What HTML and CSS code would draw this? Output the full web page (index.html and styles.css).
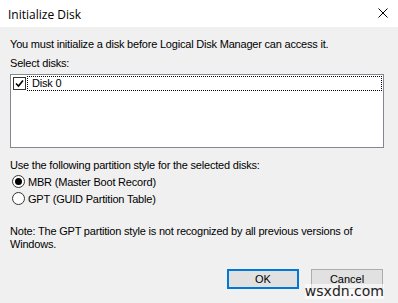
FILE: index.html
```html
<!DOCTYPE html>
<html>
<head>
	<meta charset="utf-8">
	<title>Initialize Disk</title>
	<link rel="stylesheet" href="styles.css">
</head>
<body>
	<div class="titlebar">
		<span class="title">Initialize Disk</span>
		<svg class="close" width="10" height="10" viewBox="0 0 10 10">
			<path d="M0.5 0.5 L9.5 9.5 M9.5 0.5 L0.5 9.5" stroke="#000" stroke-width="1" fill="none"/>
		</svg>
	</div>

	<div class="content">
		<p class="intro">You must initialize a disk before Logical Disk Manager can access it.</p>
		<p class="label">Select disks:</p>

		<div class="listbox">
			<div class="item">
				<span class="check">
					<svg width="9" height="9" viewBox="0 0 9 9">
						<path d="M1 4.5 L3.5 7 L8 1.5" stroke="#000" stroke-width="1.6" fill="none"/>
					</svg>
				</span>
				<span class="item-text">Disk 0</span>
			</div>
		</div>

		<p class="label style-label">Use the following partition style for the selected disks:</p>
		<div class="radio-row">
			<span class="radio checked"></span>
			<span>MBR (Master Boot Record)</span>
		</div>
		<div class="radio-row">
			<span class="radio"></span>
			<span>GPT (GUID Partition Table)</span>
		</div>

		<p class="note">Note: The GPT partition style is not recognized by all previous versions of Windows.</p>

		<div class="buttons">
			<button class="btn default">OK</button>
			<button class="btn">Cancel</button>
		</div>
	</div>

	<div class="watermark">wsxdn.com</div>
</body>
</html>
```

FILE: styles.css
```css
html{font-family: "Liberation Sans", Arial, sans-serif;}
body{
	margin: 0;
	width: 398px;
	height: 303px;
	background: #f0f0f0;
	position: relative;
	overflow: hidden;
	font-size: 11px;
	letter-spacing: -0.2px;
	color: #000;
}

.titlebar {
	height: 27px;
	background: #fff;
	display: flex;
	align-items: center;
	justify-content: space-between;
	padding: 0 10px 0 8px;
	letter-spacing: 0;
}

.title {
	font-family: "Open Sans", "Liberation Sans", sans-serif;
	font-size: 12px;
	margin-top: 1px;
}

.close {
	margin-top: -2px;
}

.content {
	padding: 11px 15px 0 10px;
}

p {
	margin: 0;
	line-height: 13px;
}

.label {
	margin-top: 6px;
}

.listbox {
	margin-top: 4px;
	width: 370px;
	height: 70px;
	background: #fff;
	border: 1px solid #828790;
	padding: 1px 1px;
}

.item {
	display: flex;
	align-items: center;
	height: 15px;
}

.check {
	width: 11px;
	height: 11px;
	border: 1px solid #333;
	background: #fff;
	margin-left: 1px;
	display: flex;
	align-items: center;
	justify-content: center;
}

.item-text {
	flex: 1;
	height: 13px;
	line-height: 13px;
	margin-left: 1px;
	padding-left: 4px;
	border: 1px dotted #000;
}

.style-label {
	margin-top: 11px;
}

.radio-row {
	display: flex;
	align-items: center;
	height: 17px;
	margin-top: 1px;
}

.radio-row + .radio-row {
	margin-top: 0;
}

.radio {
	width: 11px;
	height: 11px;
	border: 1px solid #333;
	border-radius: 50%;
	background: #fff;
	margin: 0 3px 0 2px;
	position: relative;
}

.radio.checked::after {
	content: "";
	position: absolute;
	left: 2px;
	top: 2px;
	width: 7px;
	height: 7px;
	border-radius: 50%;
	background: #000;
}

.note {
	margin-top: 18px;
	width: 360px;
}

.buttons {
	margin-top: 18px;
	display: flex;
	justify-content: flex-end;
	gap: 12px;
}

.btn {
	width: 72px;
	height: 20px;
	padding: 0;
	font-family: "Liberation Sans", Arial, sans-serif;
	font-size: 11px;
	background: #e1e1e1;
	border: 1px solid #adadad;
	color: #000;
}

.btn.default {
	border: 2px solid #0078d7;
}

/* watermark from the source picture */
.watermark {
	position: absolute;
	right: 14px;
	bottom: 4px;
	font-family: "DejaVu Sans", sans-serif;
	font-size: 14px;
	letter-spacing: 0;
	color: #222;
	background: rgba(255,255,255,0.6);
	line-height: 15px;
}
```
